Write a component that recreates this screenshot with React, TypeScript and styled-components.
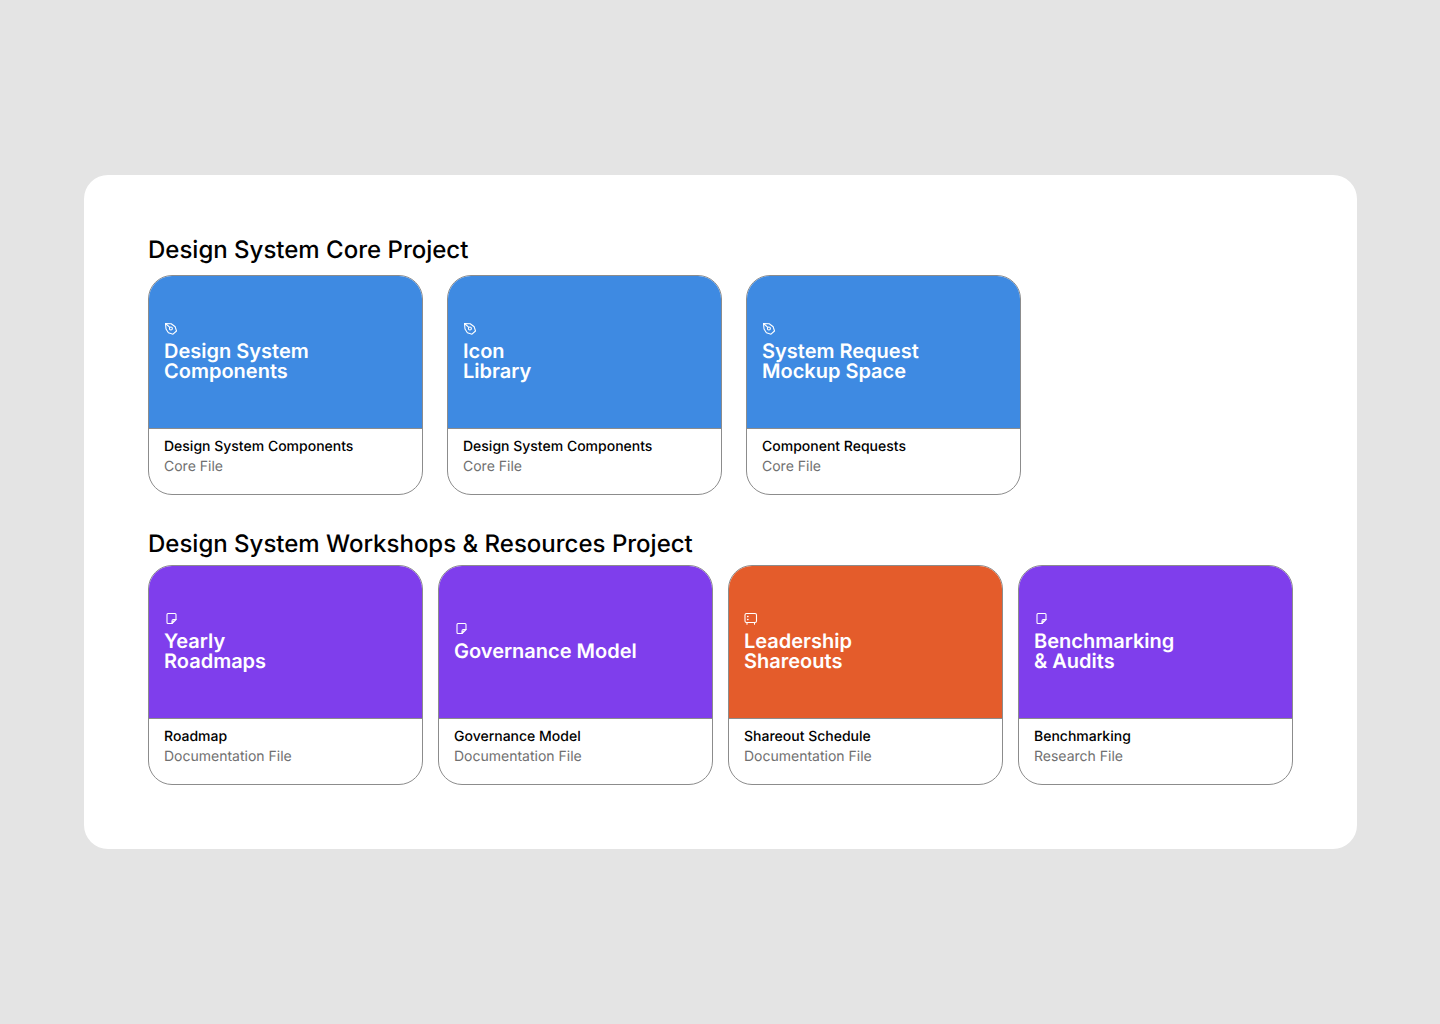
import React from "react";
import styled, { createGlobalStyle } from "styled-components";

const GlobalStyle = createGlobalStyle`
  *, *::before, *::after { box-sizing: border-box; }
  body {
    margin: 0;
    background: #e4e4e4;
    font-family: Inter, "Liberation Sans", sans-serif;
    color: #000;
    text-rendering: geometricPrecision;
  }
`;

const Page = styled.main`
  min-height: 100vh;
  display: flex;
  align-items: center;
  justify-content: center;
  padding: 24px 83px 24px 84px;
`;

const Panel = styled.div`
  flex: 1;
  max-width: 1273px;
  display: flex;
  flex-direction: column;
  gap: 38px;
  padding: 64px;
  border-radius: 24px;
  background: #fff;
`;

const Section = styled.section<{ $gap: number }>`
  display: flex;
  flex-direction: column;
  gap: ${(p) => p.$gap}px;
`;

const SectionTitle = styled.h2`
  margin: 0;
  font-size: 24px;
  line-height: 22px;
  font-weight: 500;
`;

const CardRow = styled.div<{ $gap: number }>`
  display: flex;
  flex-wrap: wrap;
  gap: ${(p) => p.$gap}px;
`;

const Card = styled.article`
  width: 275px;
  overflow: hidden;
  border: 1px solid #8c8c8c;
  border-radius: 24px;
  background: #fff;
`;

const Cover = styled.div<{ $color: string }>`
  display: flex;
  flex-direction: column;
  justify-content: center;
  gap: 5px;
  height: 153px;
  padding: 0 15px 1px;
  border-bottom: 1px solid #8c8c8c;
  background: ${(p) => p.$color};
  color: #fff;
`;

const CoverTitle = styled.h3`
  margin: 0;
  font-size: 20px;
  line-height: 20px;
  font-weight: 600;
  white-space: pre-line;
`;

const Icon = styled.svg`
  display: block;
  width: 14px;
  height: 14px;
  fill: none;
  stroke: currentColor;
  stroke-linecap: round;
  stroke-linejoin: round;
`;

const Details = styled.div`
  padding: 8px 15px 17px;
  font-size: 14px;
  line-height: 20px;
`;

const FileName = styled.p`
  margin: 0;
  font-weight: 500;
`;

const FileKind = styled.p`
  margin: 0;
  color: #707070;
`;

type Kind = "design" | "note" | "slides";

const colors: Record<Kind, string> = {
  design: "#3e8ae2",
  note: "#7f3eec",
  slides: "#e45c2b",
};

function KindIcon({ kind }: { kind: Kind }) {
  if (kind === "design") {
    return (
      <Icon viewBox="0 0 14 14" strokeWidth="1.1" aria-hidden="true">
        <path d="M1.5 1.5 7.2 1.7 11.2 4.8 12.5 9 9 12.2 4.4 10.8 2 7Z" />
        <path d="M1.5 1.5 5.8 5.4" />
        <circle cx="6.9" cy="6.5" r="1.5" />
      </Icon>
    );
  }
  if (kind === "note") {
    return (
      <Icon viewBox="0 0 14 14" strokeWidth="1.1" aria-hidden="true">
        <path d="M4 1.5H11Q12 1.5 12 2.5V7.5L8 11.5H4Q3 11.5 3 10.5V2.5Q3 1.5 4 1.5Z" />
        <path d="M12 7.5H9.5Q8 7.5 8 9V11.5" />
        <path d="M9.5 9 8.5 10" />
      </Icon>
    );
  }
  return (
    <Icon viewBox="0 0 14 14" strokeWidth="1.1" aria-hidden="true">
      <rect x="1" y="1.5" width="11.5" height="9" rx="1.5" />
      <path d="M3.6 4.5H4M3.6 7.5H4" strokeWidth="1.4" />
      <path d="M3 10.5V12.3M10.5 10.5V12.3" />
    </Icon>
  );
}

interface FileItem {
  kind: Kind;
  title: string;
  name: string;
  type: string;
}

const coreFiles: FileItem[] = [
  { kind: "design", title: "Design System\nComponents", name: "Design System Components", type: "Core File" },
  { kind: "design", title: "Icon\nLibrary", name: "Design System Components", type: "Core File" },
  { kind: "design", title: "System Request\nMockup Space", name: "Component Requests", type: "Core File" },
];

const resourceFiles: FileItem[] = [
  { kind: "note", title: "Yearly\nRoadmaps", name: "Roadmap", type: "Documentation File" },
  { kind: "note", title: "Governance Model", name: "Governance Model", type: "Documentation File" },
  { kind: "slides", title: "Leadership\nShareouts", name: "Shareout Schedule", type: "Documentation File" },
  { kind: "note", title: "Benchmarking\n& Audits", name: "Benchmarking", type: "Research File" },
];

function FileCard({ file }: { file: FileItem }) {
  return (
    <Card>
      <Cover $color={colors[file.kind]}>
        <KindIcon kind={file.kind} />
        <CoverTitle>{file.title}</CoverTitle>
      </Cover>
      <Details>
        <FileName>{file.name}</FileName>
        <FileKind>{file.type}</FileKind>
      </Details>
    </Card>
  );
}

export default function App() {
  return (
    <>
      <GlobalStyle />
      <Page>
        <Panel>
          <Section $gap={14}>
            <SectionTitle>Design System Core Project</SectionTitle>
            <CardRow $gap={24}>
              {coreFiles.map((f) => (
                <FileCard key={f.title} file={f} />
              ))}
            </CardRow>
          </Section>
          <Section $gap={10}>
            <SectionTitle>Design System Workshops &amp; Resources Project</SectionTitle>
            <CardRow $gap={15}>
              {resourceFiles.map((f) => (
                <FileCard key={f.title} file={f} />
              ))}
            </CardRow>
          </Section>
        </Panel>
      </Page>
    </>
  );
}
